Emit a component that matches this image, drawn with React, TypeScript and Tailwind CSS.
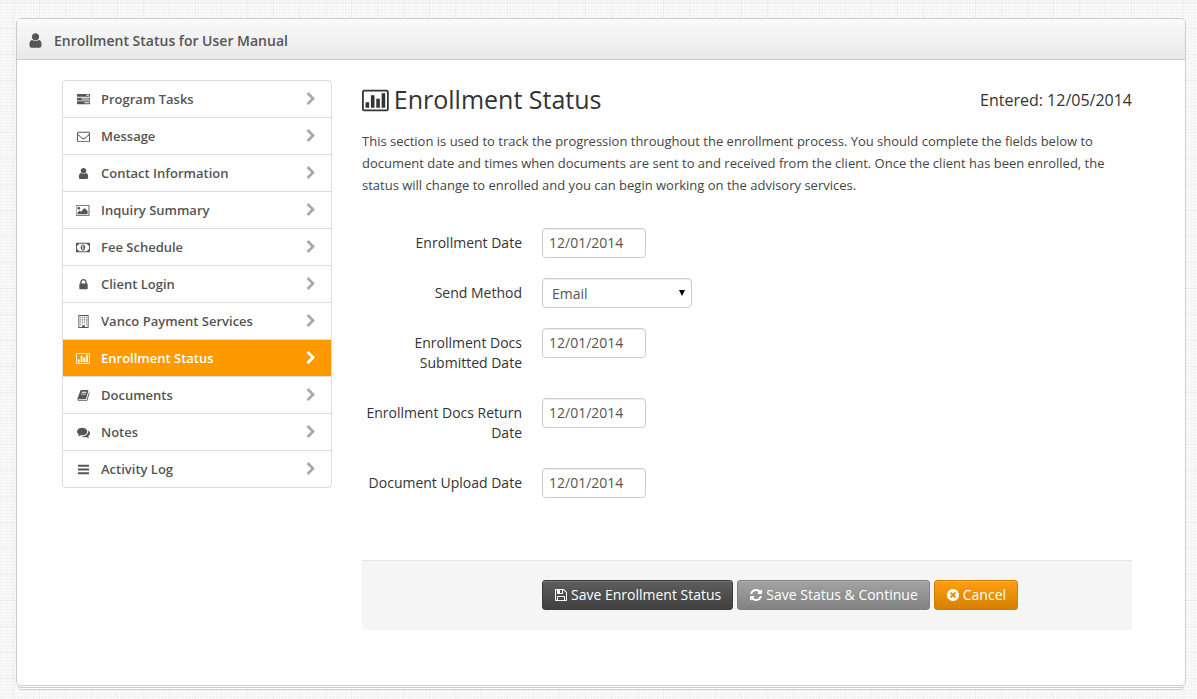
import React from "react";

const PATHS = {
  user: "M1536 1399q0 109-62.5 187t-150.5 78h-854q-88 0-150.5-78t-62.5-187q0-85 8.5-160.5t31.5-152 58.5-131 94-89 134.5-34.5q131 128 313 128t313-128q76 0 134.5 34.5t94 89 58.5 131 31.5 152 8.5 160.5zm-256-887q0 159-112.5 271.5t-271.5 112.5-271.5-112.5-112.5-271.5 112.5-271.5 271.5-112.5 271.5 112.5 112.5 271.5z",
  tasks: "M1024 1408h640v-128h-640v128zm-384-512h1024v-128h-1024v128zm640-512h384v-128h-384v128zm512 832v256q0 26-19 45t-45 19h-1664q-26 0-45-19t-19-45v-256q0-26 19-45t45-19h1664q26 0 45 19t19 45zm0-512v256q0 26-19 45t-45 19h-1664q-26 0-45-19t-19-45v-256q0-26 19-45t45-19h1664q26 0 45 19t19 45zm0-512v256q0 26-19 45t-45 19h-1664q-26 0-45-19t-19-45v-256q0-26 19-45t45-19h1664q26 0 45 19t19 45z",
  envelope: "M1664 1504v-768q-32 36-69 66-268 206-426 338-51 43-83 67t-86.5 48.5-102.5 24.5h-2q-48 0-102.5-24.5t-86.5-48.5-83-67q-158-132-426-338-37-30-69-66v768q0 13 9.5 22.5t22.5 9.5h1472q13 0 22.5-9.5t9.5-22.5zm0-1051v-24.5l-.5-13-3-12.5-5.5-9-9-7.5-14-2.5h-1472q-13 0-22.5 9.5t-9.5 22.5q0 168 147 284 193 152 401 317 6 5 35 29.5t46 37.5 44.5 31.5 50.5 27.5 43 9h2q20 0 43-9t50.5-27.5 44.5-31.5 46-37.5 35-29.5q208-165 401-317 54-43 100.5-115.5t46.5-131.5zm128-37v1088q0 66-47 113t-113 47h-1472q-66 0-113-47t-47-113v-1088q0-66 47-113t113-47h1472q66 0 113 47t47 113z",
  lock: "M640 768h512v-192q0-106-75-181t-181-75-181 75-75 181v192zm832 96v576q0 40-28 68t-68 28h-960q-40 0-68-28t-28-68v-576q0-40 28-68t68-28h32v-192q0-184 132-316t316-132 316 132 132 316v192h32q40 0 68 28t28 68z",
  picture: "M576 576q0 80-56 136t-136 56-136-56-56-136 56-136 136-56 136 56 56 136zm1024 384v448h-1408v-192l320-320 160 160 512-512zm96-704h-1600q-13 0-22.5 9.5t-9.5 22.5v1216q0 13 9.5 22.5t22.5 9.5h1600q13 0 22.5-9.5t9.5-22.5v-1216q0-13-9.5-22.5t-22.5-9.5zm160 32v1216q0 66-47 113t-113 47h-1600q-66 0-113-47t-47-113v-1216q0-66 47-113t113-47h1600q66 0 113 47t47 113z",
  money: "M768 1152h384v-96h-128v-448h-114l-148 137 77 80q42-37 55-57h2v288h-128v96zm512-256q0 70-21 142t-59.5 134-101.5 101-138 39-138-39-101.5-101-59.5-134-21-142 21-142 59.5-134 101.5-101 138-39 138 39 101.5 101 59.5 134 21 142zm512 256v-512q-106 0-181-75t-75-181h-1152q0 106-75 181t-181 75v512q106 0 181 75t75 181h1152q0-106 75-181t181-75zm128-832v1152q0 26-19 45t-45 19h-1792q-26 0-45-19t-19-45v-1152q0-26 19-45t45-19h1792q26 0 45 19t19 45z",
  building: "M192 0h1408v1792h-1408zM320 128v1536h384v-256h384v256h384v-1536zM448 256h128v128h-128zM704 256h128v128h-128zM960 256h128v128h-128zM1216 256h128v128h-128zM448 512h128v128h-128zM704 512h128v128h-128zM960 512h128v128h-128zM1216 512h128v128h-128zM448 768h128v128h-128zM704 768h128v128h-128zM960 768h128v128h-128zM1216 768h128v128h-128zM448 1024h128v128h-128zM704 1024h128v128h-128zM960 1024h128v128h-128zM1216 1024h128v128h-128zM448 1280h128v128h-128zM1216 1280h128v128h-128z",
  chart: "M160 128h1600a160 160 0 0 1 160 160v1216a160 160 0 0 1-160 160h-1600a160 160 0 0 1-160-160v-1216a160 160 0 0 1 160-160zM160 256a32 32 0 0 0-32 32v1216a32 32 0 0 0 32 32h1600a32 32 0 0 0 32-32v-1216a32 32 0 0 0-32-32zM256 1024h256v384h-256zM640 512h256v896h-256zM1024 768h256v640h-256zM1408 384h256v1024h-256z",
  book: "M1703 478q40 57 18 129l-275 906q-19 64-76.5 107.5t-122.5 43.5h-923q-77 0-148.5-53.5t-99.5-131.5q-24-67-2-127 0-4 3-27t4-37q1-8-3-21.5t-3-19.5q2-11 8-21t16.5-23.5 16.5-23.5q23-38 45-91.5t30-91.5q3-10 .5-30t-.5-28q3-11 17-28t17-23q21-36 42-92t25-90q1-9-2.5-32t.5-28q4-13 22-30.5t22-22.5q19-26 42.5-84.5t27.5-96.5q1-8-3-25.5t-2-26.5q2-8 9-18t18-23 17-21q8-12 16.5-30.5t15-35 16-36 19.5-32 26.5-23.5 36-11.5 47.5 5.5l-1 3q38-9 51-9h761q74 0 114 56t18 130l-274 906q-36 119-71.5 153.5t-128.5 34.5h-869q-27 0-38 15-11 16-1 43 24 70 144 70h923q29 0 56-15.5t35-41.5l300-987q7-22 5-57 38 15 59 43zm-1064 2q-4 13 2 22.5t20 9.5h608q13 0 25.5-9.5t16.5-22.5l21-64q4-13-2-22.5t-20-9.5h-608q-13 0-25.5 9.5t-16.5 22.5zm-83 256q-4 13 2 22.5t20 9.5h608q13 0 25.5-9.5t16.5-22.5l21-64q4-13-2-22.5t-20-9.5h-608q-13 0-25.5 9.5t-16.5 22.5z",
  comments: "M1408 768q0 139-94 257t-256.5 186.5-353.5 68.5q-86 0-176-16-124 88-278 128-36 9-86 16h-3q-11 0-20.5-8t-11.5-21q-1-3-1-6.5t.5-6.5 2-6l2.5-5 3.5-5.5 4-5 4.5-5 4-4.5q5-6 23-25t26-29.5 22.5-29 25-38.5 20.5-44q-124-72-195-177t-71-224q0-139 94-257t256.5-186.5 353.5-68.5 353.5 68.5 256.5 186.5 94 257zm384 256q0 120-71 224.5t-195 176.5q10 24 20.5 44t25 38.5 22.5 29 26 29.5 23 25q1 1 4 4.5t4.5 5 4 5 3.5 5.5l2.5 5 2 6 .5 6.5-1 6.5q-3 14-13 22t-22 7q-50-7-86-16-154-40-278-128-90 16-176 16-271 0-472-132 58 4 88 4 161 0 309-45t264-129q125-92 192-212t67-254q0-77-23-152 129 71 204 178t75 230z",
  bars: "M1664 1344v128q0 26-19 45t-45 19h-1408q-26 0-45-19t-19-45v-128q0-26 19-45t45-19h1408q26 0 45 19t19 45zm0-512v128q0 26-19 45t-45 19h-1408q-26 0-45-19t-19-45v-128q0-26 19-45t45-19h1408q26 0 45 19t19 45zm0-512v128q0 26-19 45t-45 19h-1408q-26 0-45-19t-19-45v-128q0-26 19-45t45-19h1408q26 0 45 19t19 45z",
  chevron: "M1363 877l-742 742q-19 19-45 19t-45-19l-166-166q-19-19-19-45t19-45l531-531-531-531q-19-19-19-45t19-45l166-166q19-19 45-19t45 19l742 742q19 19 19 45t-19 45z",
  floppy: "M512 1536h768v-384h-768v384zm896 0h128v-896q0-14-10-38.5t-20-34.5l-281-281q-10-10-34-20t-39-10v416q0 40-28 68t-68 28h-576q-40 0-68-28t-28-68v-416h-128v1280h128v-416q0-40 28-68t68-28h832q40 0 68 28t28 68v416zm-384-928v-320q0-13-9.5-22.5t-22.5-9.5h-192q-13 0-22.5 9.5t-9.5 22.5v320q0 13 9.5 22.5t22.5 9.5h192q13 0 22.5-9.5t9.5-22.5zm640 32v928q0 40-28 68t-68 28h-1344q-40 0-68-28t-28-68v-1344q0-40 28-68t68-28h928q40 0 88 20t76 48l280 280q28 28 48 76t20 88z",
  refresh: "M1639 1056q0 5-1 7-64 268-268 434.5t-478 166.5q-146 0-282.5-55t-243.5-157l-129 129q-19 19-45 19t-45-19-19-45v-448q0-26 19-45t45-19h448q26 0 45 19t19 45-19 45l-137 137q71 66 161 102t187 36q134 0 250-65t186-179q11-17 53-117 8-23 30-23h192q13 0 22.5 9.5t9.5 22.5zm25-800v448q0 26-19 45t-45 19h-448q-26 0-45-19t-19-45 19-45l138-138q-148-137-349-137-134 0-250 65t-186 179q-11 17-53 117-8 23-30 23h-199q-13 0-22.5-9.5t-9.5-22.5v-7q65-268 270-434.5t480-166.5q146 0 284 55.5t245 156.5l130-129q19-19 45-19t45 19 19 45z",
  cancel: "M1277 1122q0-26-19-45l-181-181 181-181q19-19 19-45 0-27-19-46l-90-90q-19-19-46-19-26 0-45 19l-181 181-181-181q-19-19-45-19-27 0-46 19l-90 90q-19 19-19 46 0 26 19 45l181 181-181 181q-19 19-19 45 0 27 19 46l90 90q19 19 46 19 26 0 45-19l181-181 181 181q19 19 45 19 27 0 46-19l90-90q19-19 19-46zm387-226q0 209-103 385.5t-279.5 279.5-385.5 103-385.5-103-279.5-279.5-103-385.5 103-385.5 279.5-279.5 385.5-103 385.5 103 279.5 279.5 103 385.5z",
};

type IconName = keyof typeof PATHS;

const WIDE: IconName[] = ["picture", "money", "chart"];

function Icon({ name, className }: { name: IconName; className: string }) {
  return (
    <svg
      viewBox={WIDE.includes(name) ? "0 0 1920 1792" : "0 0 1792 1792"}
      className={`shrink-0 ${className}`}
      fill="currentColor"
      fillRule="evenodd"
      aria-hidden="true"
    >
      <path d={PATHS[name]} />
    </svg>
  );
}

const NAV: { icon: IconName; label: string; active?: boolean }[] = [
  { icon: "tasks", label: "Program Tasks" },
  { icon: "envelope", label: "Message" },
  { icon: "user", label: "Contact Information" },
  { icon: "picture", label: "Inquiry Summary" },
  { icon: "money", label: "Fee Schedule" },
  { icon: "lock", label: "Client Login" },
  { icon: "building", label: "Vanco Payment Services" },
  { icon: "chart", label: "Enrollment Status", active: true },
  { icon: "book", label: "Documents" },
  { icon: "comments", label: "Notes" },
  { icon: "bars", label: "Activity Log" },
];

function SideNav() {
  return (
    <nav className="w-[270px] shrink-0 self-start rounded border border-[#dddddd]">
      <ul className="divide-y divide-[#dddddd]">
        {NAV.map(({ icon, label, active }) => (
          <li key={label}>
            <a
              href="#"
              aria-current={active ? "page" : undefined}
              className={`flex h-9 items-center pr-[13px] pl-3 text-[13px] font-semibold ${
                active ? "bg-[#ff9900] text-white" : "text-[#555555]"
              }`}
            >
              <span className="flex w-4 justify-center">
                <Icon name={icon} className="h-[13px]" />
              </span>
              <span className="ml-2.5 flex-1 pt-0.5">{label}</span>
              <Icon name="chevron" className={`size-3.5 ${active ? "text-white" : "text-[#aaaaaa]"}`} />
            </a>
          </li>
        ))}
      </ul>
    </nav>
  );
}

const CONTROL =
  "h-[30px] rounded border border-[#cccccc] bg-white text-sm text-[#555555] shadow-[inset_0_1px_1px_rgba(0,0,0,0.075)]";

function Field({ id, label, children }: { id: string; label: string; children: React.ReactNode }) {
  return (
    <div className="flex items-start gap-5">
      <label htmlFor={id} className="my-[5px] w-40 shrink-0 text-right text-sm leading-5 text-[#333333]">
        {label}
      </label>
      {children}
    </div>
  );
}

function DateField({ id, label }: { id: string; label: string }) {
  return (
    <Field id={id} label={label}>
      <input id={id} type="text" defaultValue="12/01/2014" className={`w-[104px] px-1.5 pb-0.5 ${CONTROL}`} />
    </Field>
  );
}

const BUTTON =
  "flex h-[30px] items-center gap-[3px] rounded-[3px] border px-[11px] text-sm text-white shadow-[inset_0_1px_0_rgba(255,255,255,0.15)]";

const TEXTURE =
  "bg-[#fafafa] bg-[repeating-linear-gradient(90deg,transparent_0_13px,rgba(0,0,0,0.03)_13px_14px,transparent_14px_26px),repeating-linear-gradient(180deg,transparent_0_2px,rgba(0,0,0,0.03)_2px_3px,transparent_3px_26px),repeating-linear-gradient(90deg,rgba(0,0,0,0.018)_0_1px,transparent_1px_3px),repeating-linear-gradient(180deg,rgba(0,0,0,0.018)_0_1px,transparent_1px_3px)]";

export default function App() {
  return (
    <div
      className={`min-h-screen pt-[18px] pr-[11px] pb-[13px] pl-4 font-['Open_Sans',sans-serif] text-[#333333] ${TEXTURE}`}
    >
      <section className="rounded-[5px] border border-[#cccccc] bg-white shadow-[0_1px_0_-1px_#ffffff,0_2px_0_-1px_#ffffff,0_3px_0_-1px_#cccccc,0_4px_0_-2px_#ffffff,0_6px_0_-3px_#ffffff,0_7px_0_-3px_#cccccc]">
        <header className="flex h-[41px] items-center gap-2.5 rounded-t border-b border-[#cdcdcd] bg-linear-to-b from-[#fafafa] to-[#e9e9e9] pt-0.5 pr-3 pl-2.5 text-[#555555]">
          <Icon name="user" className="size-[17px]" />
          <h1 className="pt-0.5 text-sm font-semibold">Enrollment Status for User Manual</h1>
        </header>
        <div className="flex gap-[30px] pt-5 pr-[53px] pb-[55px] pl-[45px]">
          <SideNav />
          <main className="min-w-0 flex-1">
            <div className="flex h-10 items-center justify-between">
              <h2 className="flex items-center gap-[5px] text-[25px]">
                <Icon name="chart" className="h-[25px]" />
                Enrollment Status
              </h2>
              <p className="text-base">Entered: 12/05/2014</p>
            </div>
            <p className="mt-2.5 text-[13px] leading-[22px] text-[#444444]">
              This section is used to track the progression throughout the enrollment process. You should complete the
              fields below to document date and times when documents are sent to and received from the client. Once the
              client has been enrolled, the status will change to enrolled and you can begin working on the advisory
              services.
            </p>
            <form onSubmit={(e) => e.preventDefault()}>
              <div className="mt-8 flex flex-col gap-5">
                <DateField id="enrollment-date" label="Enrollment Date" />
                <Field id="send-method" label="Send Method">
                  <div className="relative">
                    <select id="send-method" className={`w-[150px] appearance-none px-[9px] pt-0.5 ${CONTROL}`}>
                      <option>Email</option>
                    </select>
                    <svg viewBox="0 0 6 6" className="pointer-events-none absolute top-3 right-[7px] size-1.5" aria-hidden="true">
                      <path d="M0 0h6L3 6z" fill="#000000" />
                    </svg>
                  </div>
                </Field>
                <DateField id="docs-submitted" label="Enrollment Docs Submitted Date" />
                <DateField id="docs-return" label="Enrollment Docs Return Date" />
                <DateField id="document-upload" label="Document Upload Date" />
              </div>
              <div className="mt-[62px] flex gap-1 border-t border-[#e5e5e5] bg-[#f5f5f5] pt-[19px] pr-5 pb-5 pl-[180px]">
                <button type="submit" className={`border-[#3a3a3a] bg-linear-to-b from-[#5e5e5e] to-[#404040] ${BUTTON}`}>
                  <Icon name="floppy" className="size-3.5" />
                  Save Enrollment Status
                </button>
                <button type="button" className={`border-[#808080] bg-linear-to-b from-[#a3a3a3] to-[#828282] ${BUTTON}`}>
                  <Icon name="refresh" className="size-3.5" />
                  Save Status &amp; Continue
                </button>
                <button type="button" className={`border-[#d07d00] bg-linear-to-b from-[#ff9e12] to-[#d58000] ${BUTTON}`}>
                  <Icon name="cancel" className="size-3.5" />
                  Cancel
                </button>
              </div>
            </form>
          </main>
        </div>
      </section>
    </div>
  );
}
